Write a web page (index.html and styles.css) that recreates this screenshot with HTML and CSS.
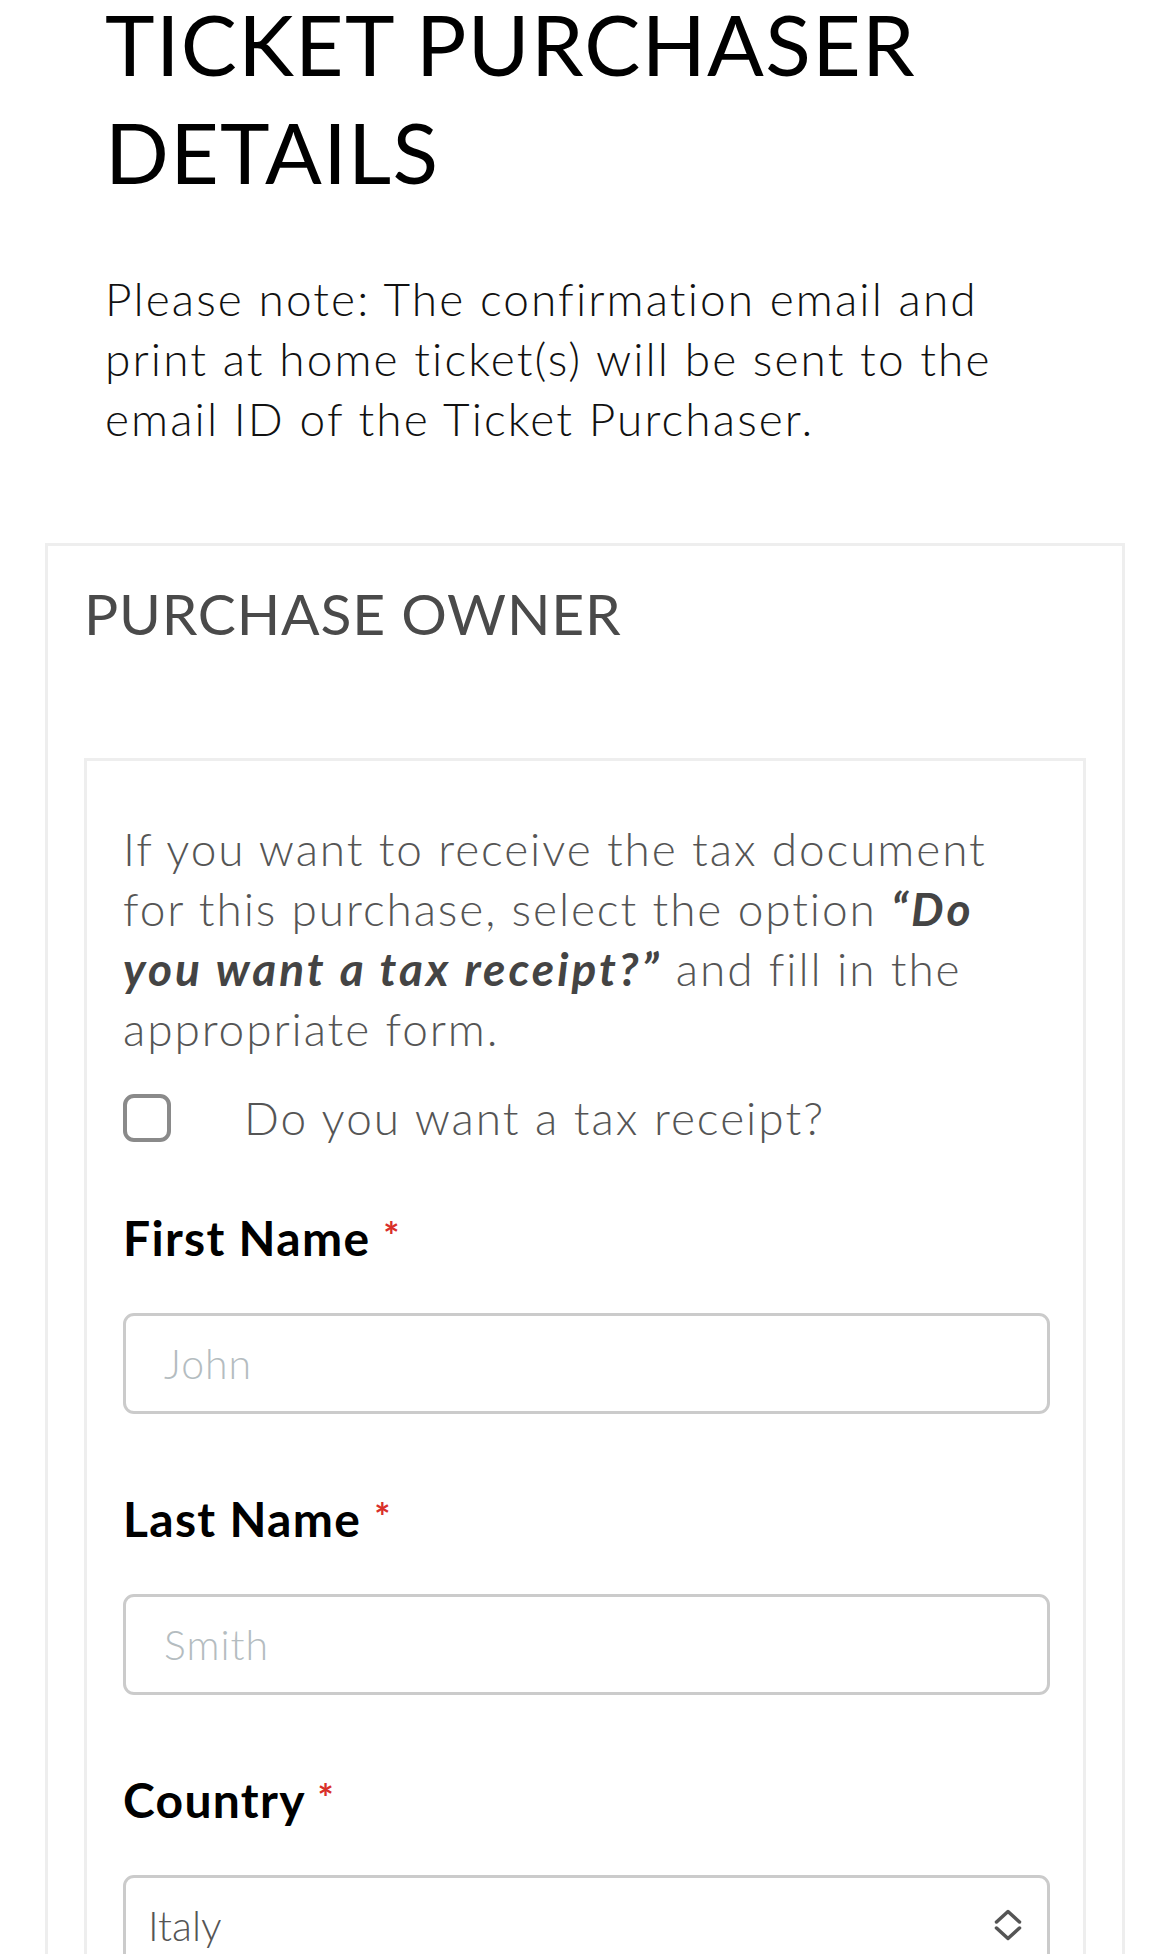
FILE: index.html
```html
<!DOCTYPE html>
<html lang="en">
<head>
  <meta charset="UTF-8" />
  <meta name="viewport" content="width=device-width, initial-scale=1.0" />
  <title>Ticket Purchaser Details</title>
  <link rel="stylesheet" href="styles.css">
</head>
<body>
  <div class="page">
    <h1 class="page-title">TICKET PURCHASER DETAILS</h1>
    <p class="note">Please note: The confirmation email and print at home ticket(s) will be sent to the email ID of the Ticket Purchaser.</p>
  </div>

  <div class="owner-box">
    <h2 class="owner-title">PURCHASE OWNER</h2>

    <div class="owner-form">
      <p class="tax-info">If you want to receive the tax document for this purchase, select the option <em>“Do you want a tax receipt?”</em> and fill in the appropriate form.</p>

      <label class="check-row">
        <input type="checkbox" class="check" />
        <span>Do you want a tax receipt?</span>
      </label>

      <div class="field">
        <label class="field-label" for="firstName">First Name <span class="req">*</span></label>
        <input id="firstName" class="text-input" type="text" placeholder="John" />
      </div>

      <div class="field">
        <label class="field-label" for="lastName">Last Name <span class="req">*</span></label>
        <input id="lastName" class="text-input" type="text" placeholder="Smith" />
      </div>

      <div class="field">
        <label class="field-label" for="country">Country <span class="req">*</span></label>
        <div class="select-wrap">
          <select id="country" class="select-input">
            <option>Italy</option>
            <option>France</option>
            <option>Germany</option>
            <option>Spain</option>
          </select>
          <svg class="select-icon" width="28" height="32" viewBox="0 0 28 32">
            <path d="M2.5 13 L14 2.5 L25.5 13" fill="none" stroke="#555" stroke-width="3.5" stroke-linecap="round" stroke-linejoin="round"/>
            <path d="M2.5 19 L14 29.5 L25.5 19" fill="none" stroke="#555" stroke-width="3.5" stroke-linecap="round" stroke-linejoin="round"/>
          </svg>
        </div>
      </div>
    </div>
  </div>
</body>
</html>
```

FILE: styles.css
```css
* {
  box-sizing: border-box;
}

body {
  margin: 0;
  font-family: 'Lato', 'Open Sans', sans-serif;
  background: #fff;
  color: #111;
  overflow: hidden;
}

.page {
  padding: 0 80px 0 105px;
}

.page-title {
  margin: -10px 0 0;
  font-size: 84px;
  line-height: 108px;
  font-weight: 400;
  color: #000;
  letter-spacing: 1.3px;
}

.note {
  margin: 63px 0 0;
  max-width: 960px;
  font-size: 46px;
  line-height: 60px;
  font-weight: 300;
  color: #111;
  letter-spacing: 2.1px;
}

.owner-box {
  margin: 94px 0 0 45px;
  width: 1080px;
  border: 3px solid #eee;
  padding: 33px 36px 60px;
}

.owner-title {
  margin: 0;
  font-size: 57px;
  line-height: 68px;
  font-weight: 400;
  color: #4a4a4a;
  letter-spacing: 0.8px;
}

.owner-form {
  margin-top: 111px;
  border: 3px solid #eee;
  padding: 58px 33px 60px 36px;
}

.tax-info {
  margin: 0;
  font-size: 46px;
  line-height: 60px;
  font-weight: 300;
  color: #555;
  letter-spacing: 1.9px;
}

.tax-info em {
  font-weight: 700;
  font-style: italic;
  color: #444;
  letter-spacing: 3px;
}

.check-row {
  display: flex;
  align-items: center;
  gap: 73px;
  margin-top: 29px;
  font-size: 46px;
  line-height: 60px;
  font-weight: 300;
  color: #555;
  letter-spacing: 2px;
}

.check {
  appearance: none;
  -webkit-appearance: none;
  margin: 0;
  width: 48px;
  height: 48px;
  border: 4px solid #8a8a8a;
  border-radius: 11px;
  background: #fff;
}

.field {
  margin-top: 60px;
}

.field + .field {
  margin-top: 75px;
}

.field-label {
  display: block;
  font-size: 48px;
  line-height: 60px;
  font-weight: 700;
  color: #000;
  letter-spacing: 1.3px;
}

.req {
  color: #d9302a;
  font-size: 38px;
  line-height: 1;
  vertical-align: top;
  position: relative;
  top: 8px;
}

.text-input,
.select-input {
  display: block;
  width: 100%;
  height: 101px;
  margin-top: 45px;
  border: 3px solid #cbcbcb;
  border-radius: 11px;
  background: #fff;
  font-family: 'Lato', 'Open Sans', sans-serif;
  font-size: 41px;
  font-weight: 300;
  color: #555;
  outline: none;
}

.text-input {
  padding: 0 38px;
  letter-spacing: 1px;
}

.text-input::placeholder {
  color: #b4bcc0;
}

.select-wrap {
  position: relative;
}

.select-input {
  appearance: none;
  -webkit-appearance: none;
  padding: 0 22px;
}

.select-icon {
  position: absolute;
  right: 28px;
  top: 34px;
}
```
